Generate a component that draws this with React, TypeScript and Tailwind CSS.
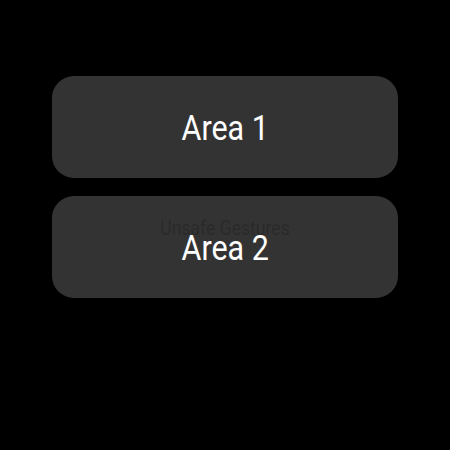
export default function App() {
  return (
    <div
      className="w-[450px] h-[450px] bg-black flex flex-col items-center pt-[76px] gap-[18px]"
      style={{ fontFamily: "Roboto, 'Noto Sans', sans-serif" }}
    >
      <div className="w-[346px] h-[102px] rounded-[22px] bg-[#333333] flex items-center justify-center">
        <span className="inline-block scale-x-[0.87] text-white text-[35px] leading-none pt-[2px]">Area 1</span>
      </div>
      <div className="relative w-[346px] h-[102px] rounded-[22px] bg-[#333333] flex items-center justify-center">
        <span className="absolute top-[17px] left-0 right-0 text-center text-[#2a2a2a] text-[20px] scale-x-[0.88]">
          Unsafe Gestures
        </span>
        <span className="relative inline-block scale-x-[0.87] text-white text-[35px] leading-none pt-[2px]">Area 2</span>
      </div>
    </div>
  );
}
